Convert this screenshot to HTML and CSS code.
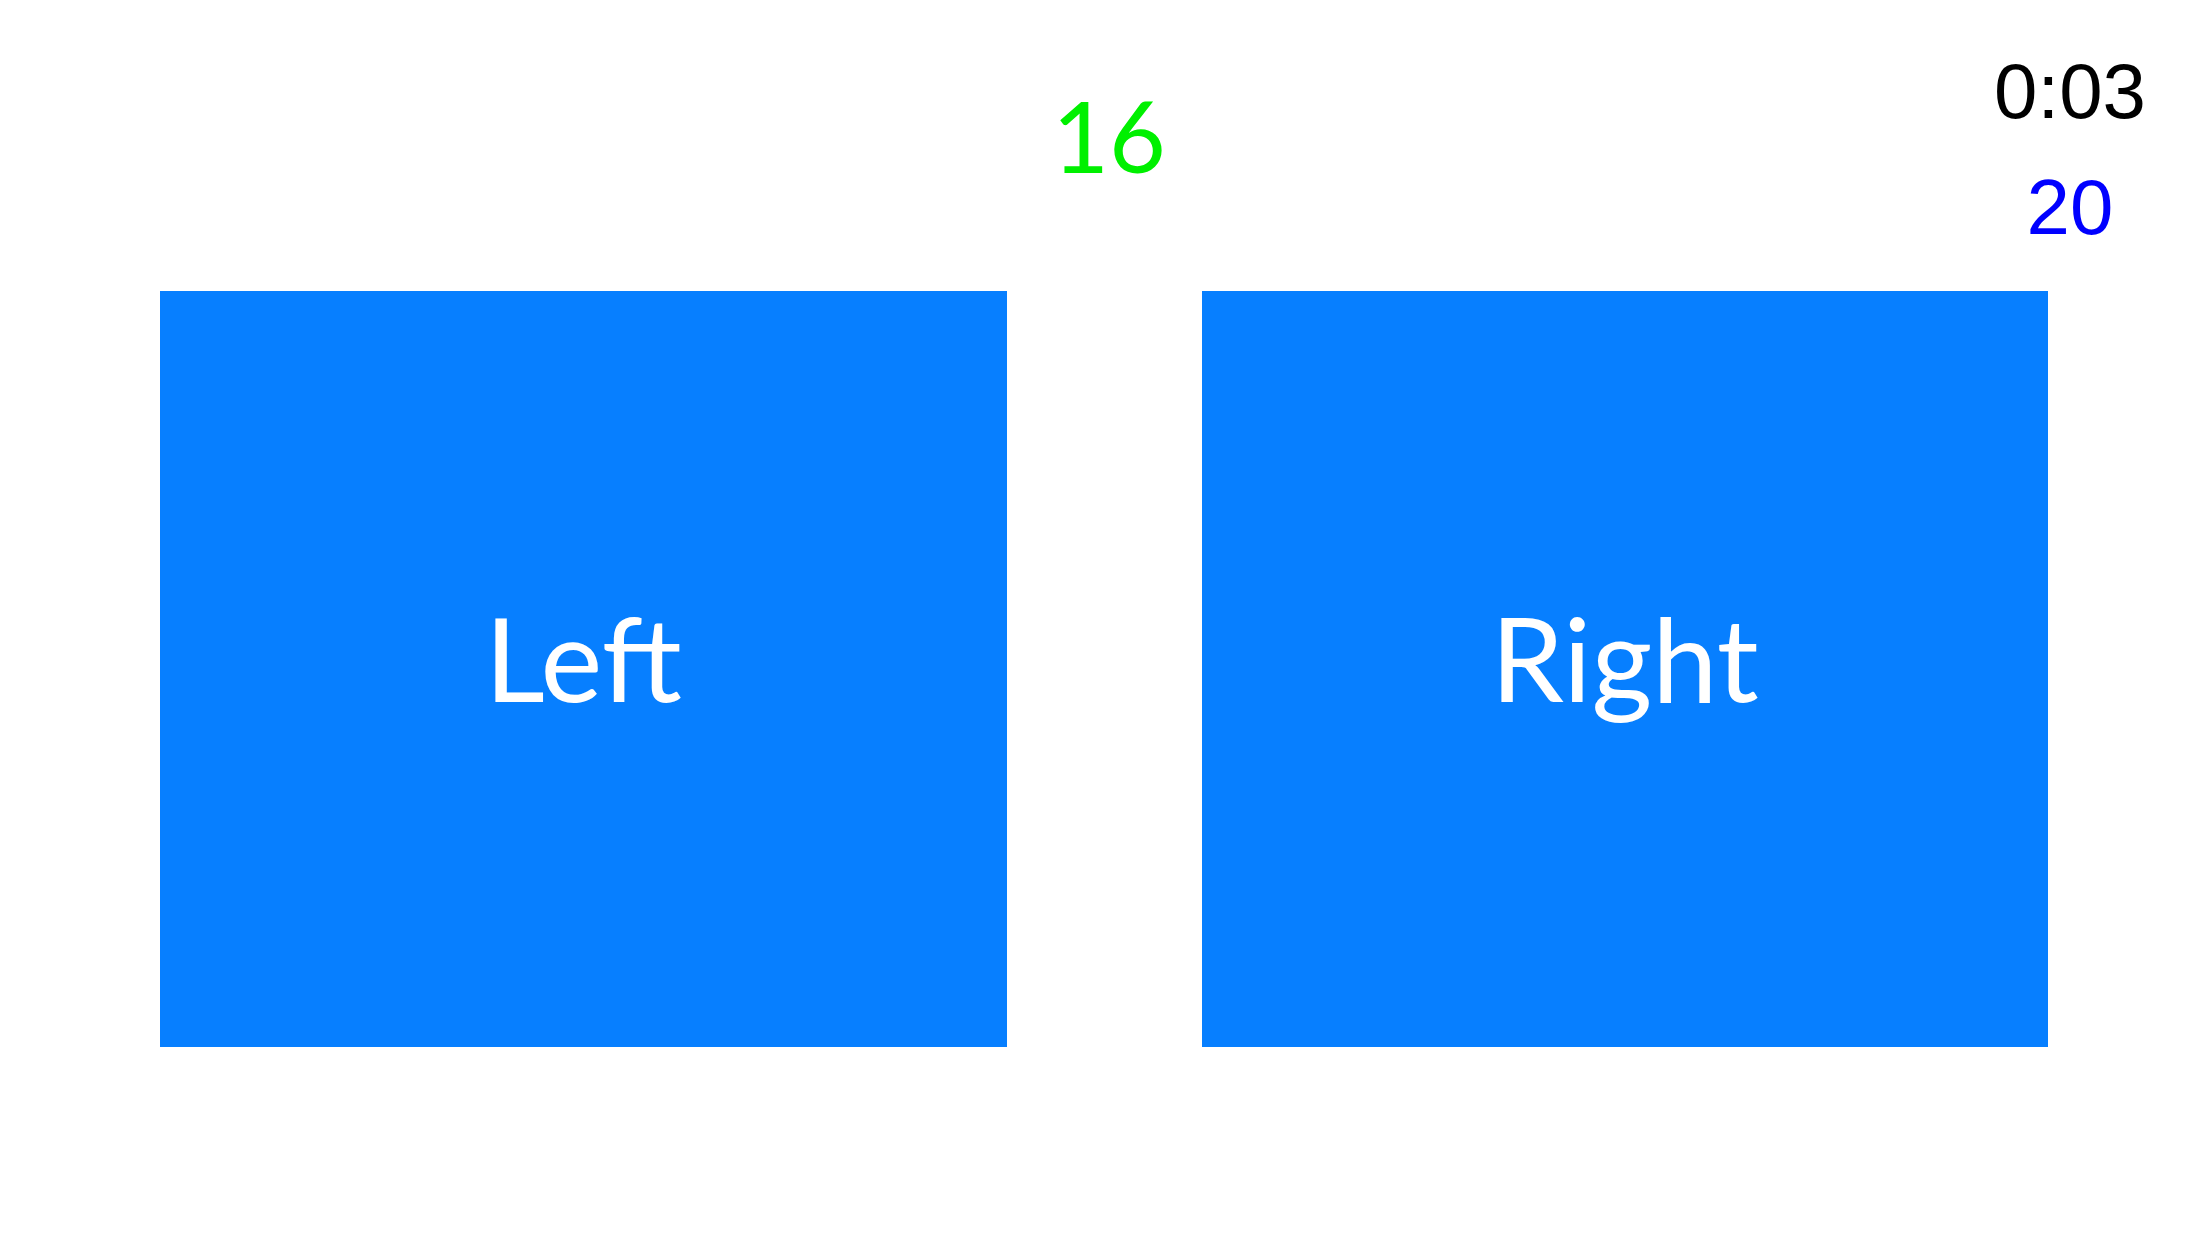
FILE: index.html
```html
<!DOCTYPE html>
<html lang="en">
<head>
    <meta charset="UTF-8">
    <meta name="viewport" content="width=device-width, initial-scale=1.0">
    <title>Left or Right</title>
    <link rel="stylesheet" href="styles.css">
</head>
<body>
    <div class="top">
        <div></div>
        <div class="score">16</div>
        <div class="status">
            <div class="clock">0:03</div>
            <div class="left-count">20</div>
        </div>
    </div>
    <div class="choices">
        <button class="choice">Left</button>
        <button class="choice">Right</button>
    </div>
</body>
</html>
```

FILE: styles.css
```css
body {
    margin: 0;
    background: #ffffff;
    font-family: Lato, "Liberation Sans", sans-serif;
}
.top {
    display: grid;
    grid-template-columns: 1fr auto 1fr;
    height: 291px;
}
.score {
    padding-top: 86px;
    font-size: 98px;
    line-height: 1;
    color: #00f000;
    padding-left: 10px;
}
.status {
    justify-self: end;
    width: 170px;
    margin-right: 53px;
    padding-top: 52px;
    text-align: center;
    font-family: "Liberation Sans", Arial, sans-serif;
    font-size: 78px;
    line-height: 1;
}
.clock {
    color: #000000;
}
.left-count {
    margin-top: 38px;
    color: #0000ff;
}
.choices {
    display: flex;
    gap: 195px;
    padding: 0 160px;
}
.choice {
    flex: 1;
    height: 756px;
    padding: 0 0 24px;
    border: none;
    border-radius: 0;
    background: #077fff;
    color: #ffffff;
    font-family: Lato, "Liberation Sans", sans-serif;
    font-size: 117px;
    line-height: normal;
    cursor: pointer;
}
```
